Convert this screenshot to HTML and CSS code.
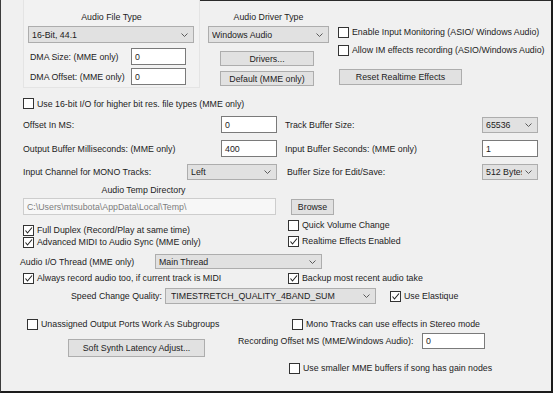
FILE: index.html
```html
<!DOCTYPE html>
<html>
  <head>
    <title>Audio Settings</title>
    <link rel="stylesheet" href="styles.css">
  </head>
  <body>
    <div class="dlg">
      <div class="top">
        <section class="grp">
          <h2 class="ttl">Audio File Type</h2>
          <div class="sel file-sel"><span>16-Bit, 44.1</span><svg class="chev" width="7" height="4"><polyline points="0.5,0.5 3.5,3.5 6.5,0.5"/></svg></div>
          <div class="dma first"><label>DMA Size: (MME only)</label><div class="edit dma-in">0</div></div>
          <div class="dma"><label>DMA Offset: (MME only)</label><div class="edit dma-in">0</div></div>
        </section>
        <section class="drv">
          <h2 class="ttl">Audio Driver Type</h2>
          <div class="sel drv-sel"><span>Windows Audio</span><svg class="chev" width="7" height="4"><polyline points="0.5,0.5 3.5,3.5 6.5,0.5"/></svg></div>
          <div class="btn drv-btn first">Drivers...</div>
          <div class="btn drv-btn second">Default (MME only)</div>
        </section>
        <section class="opts">
          <div class="cb opt1"><span class="box"></span>Enable Input Monitoring (ASIO/ Windows Audio)</div>
          <div class="cb opt2"><span class="box"></span>Allow IM effects recording (ASIO/Windows Audio)</div>
          <div class="btn reset">Reset Realtime Effects</div>
        </section>
      </div>

      <div class="row r16">
        <div class="cb"><span class="box"></span>Use 16-bit I/O for higher bit res. file types (MME only)</div>
      </div>

      <div class="row pair r-offset">
        <label class="lbl-l">Offset In MS:</label><div class="edit num">0</div>
        <label class="lbl-r">Track Buffer Size:</label>
        <div class="sel num-sel"><span>65536</span><svg class="chev" width="7" height="4"><polyline points="0.5,0.5 3.5,3.5 6.5,0.5"/></svg></div>
      </div>

      <div class="row pair r-out">
        <label class="lbl-l">Output Buffer Milliseconds: (MME only)</label><div class="edit num">400</div>
        <label class="lbl-r">Input Buffer Seconds: (MME only)</label><div class="edit num">1</div>
      </div>

      <div class="row pair r-chan">
        <label class="lbl-l short">Input Channel for MONO Tracks:</label>
        <div class="sel chan-sel"><span>Left</span><svg class="chev" width="7" height="4"><polyline points="0.5,0.5 3.5,3.5 6.5,0.5"/></svg></div>
        <label class="lbl-r alt">Buffer Size for Edit/Save:</label>
        <div class="sel num-sel"><span>512 Bytes</span><svg class="chev" width="7" height="4"><polyline points="0.5,0.5 3.5,3.5 6.5,0.5"/></svg></div>
      </div>

      <div class="row r-tmp"><div class="tmp-ttl">Audio Temp Directory</div></div>

      <div class="row r-path">
        <div class="edit path">C:\Users\mtsubota\AppData\Local\Temp\</div>
        <div class="btn browse">Browse</div>
      </div>

      <div class="row r-checks">
        <div class="col-l">
          <div class="cb duplex"><span class="box"><svg width="9" height="9"><polyline points="1.5,4.5 3.5,7 8,1.5"/></svg></span>Full Duplex (Record/Play at same time)</div>
          <div class="cb adv"><span class="box"><svg width="9" height="9"><polyline points="1.5,4.5 3.5,7 8,1.5"/></svg></span>Advanced MIDI to Audio Sync (MME only)</div>
        </div>
        <div class="col-r">
          <div class="cb quick"><span class="box"></span>Quick Volume Change</div>
          <div class="cb rte"><span class="box"><svg width="9" height="9"><polyline points="1.5,4.5 3.5,7 8,1.5"/></svg></span>Realtime Effects Enabled</div>
        </div>
      </div>

      <div class="row r-thread">
        <label class="thread-lbl">Audio I/O Thread (MME only)</label>
        <div class="sel thread-sel"><span>Main Thread</span><svg class="chev" width="7" height="4"><polyline points="0.5,0.5 3.5,3.5 6.5,0.5"/></svg></div>
      </div>

      <div class="row r-always">
        <div class="cb always"><span class="box"><svg width="9" height="9"><polyline points="1.5,4.5 3.5,7 8,1.5"/></svg></span>Always record audio too, if current track is MIDI</div>
        <div class="cb"><span class="box"><svg width="9" height="9"><polyline points="1.5,4.5 3.5,7 8,1.5"/></svg></span>Backup most recent audio take</div>
      </div>

      <div class="row r-speed">
        <label class="speed-lbl">Speed Change Quality:</label>
        <div class="sel speed-sel"><span>TIMESTRETCH_QUALITY_4BAND_SUM</span><svg class="chev" width="7" height="4"><polyline points="0.5,0.5 3.5,3.5 6.5,0.5"/></svg></div>
        <div class="cb elastique"><span class="box"><svg width="9" height="9"><polyline points="1.5,4.5 3.5,7 8,1.5"/></svg></span>Use Elastique</div>
      </div>

      <div class="row r-ports">
        <div class="cb ports"><span class="box"></span>Unassigned Output Ports Work As Subgroups</div>
        <div class="cb"><span class="box"></span>Mono Tracks can use effects in Stereo mode</div>
      </div>

      <div class="row r-soft">
        <div class="btn soft">Soft Synth Latency Adjust...</div>
        <div class="rec">
          <label class="rec-lbl">Recording Offset MS (MME/Windows Audio):</label>
          <div class="edit rec-in">0</div>
        </div>
      </div>

      <div class="row r-small">
        <div class="cb"><span class="box"></span>Use smaller MME buffers if song has gain nodes</div>
      </div>
    </div>
  </body>
</html>
```

FILE: styles.css
```css
body {
    margin: 0;
    padding: 0;
    font-family: "Liberation Sans", Arial, sans-serif;
    font-size: 8.8px;
    color: #1c1c1c;
}

.dlg {
    position: relative;
    width: 553px;
    height: 393px;
    box-sizing: border-box;
    background: #f0f0f0;
    border-left: 1px solid #3c3c3c;
    border-right: 2px solid #1c1c1c;
    border-bottom: 2px solid #1c1c1c;
    overflow: hidden;
}
.dlg::before {
    content: "";
    position: absolute;
    top: 0;
    left: 199px;
    right: 0;
    height: 1px;
    background: #2a2a2a;
}

label {
    white-space: nowrap;
}

/* common controls */
.sel,
.btn,
.edit {
    box-sizing: border-box;
    white-space: nowrap;
    overflow: hidden;
}
.sel {
    display: flex;
    align-items: center;
    height: 17px;
    padding-left: 3px;
    background: #e1e1e1;
    border: 1px solid #adadad;
}
.sel span {
    flex: 1;
    overflow: hidden;
}
.chev {
    margin: 0 5px 0 3px;
    flex: none;
}
.chev polyline {
    fill: none;
    stroke: #5a5a5a;
    stroke-width: 1;
}
.btn {
    display: flex;
    align-items: center;
    justify-content: center;
    background: #e1e1e1;
    border: 1px solid #adadad;
}
.edit {
    display: flex;
    align-items: center;
    height: 17px;
    padding-left: 3px;
    background: #fff;
    border: 1px solid #7a7a7a;
}
.cb {
    display: flex;
    align-items: center;
    height: 12px;
    white-space: nowrap;
}
.box {
    display: flex;
    align-items: center;
    justify-content: center;
    width: 11px;
    height: 11px;
    box-sizing: border-box;
    margin-right: 3px;
    background: #fff;
    border: 1px solid #333;
    flex: none;
}
.box polyline {
    fill: none;
    stroke: #222;
    stroke-width: 1.1;
}

/* top block */
.top {
    display: flex;
    height: 90px;
}
.ttl {
    margin: 11px 0 0 0;
    height: 12px;
    line-height: 12px;
    font-size: 8.8px;
    font-weight: normal;
    text-align: center;
}
.grp {
    box-sizing: border-box;
    width: 177px;
    height: 88px;
    margin-left: 22px;
    border: 1px solid #e4e4e4;
    border-top: none;
    background: #f2f2f2;
}
.file-sel {
    width: 166px;
    margin: 3px 0 0 4px;
}
.dma {
    display: flex;
    align-items: center;
    height: 17px;
    margin-top: 3px;
}
.dma.first {
    margin-top: 5px;
}
.dma label {
    box-sizing: border-box;
    width: 107px;
    padding-left: 6px;
}
.dma-in {
    width: 55px;
}
.drv {
    width: 121px;
    margin-left: 8px;
}
.drv-sel {
    width: 121px;
    margin-top: 3px;
}
.drv-btn {
    width: 94px;
    height: 15px;
    margin-left: 12px;
}
.drv-btn.first {
    margin-top: 8px;
}
.drv-btn.second {
    margin-top: 5px;
}
.opts {
    margin-left: 9px;
}
.opt1 {
    margin-top: 26px;
}
.opt2 {
    margin-top: 6px;
}
.reset {
    width: 123px;
    height: 16px;
    margin: 13px 0 0 1px;
}

/* rows */
.row {
    display: flex;
    align-items: center;
}
.r16 {
    margin: 7px 0 0 22px;
    height: 13px;
}
.pair {
    height: 17px;
    margin-top: 7px;
}
.r-offset {
    margin-top: 6px;
}
.lbl-l {
    width: 198px;
    margin-left: 22px;
}
.lbl-l.short {
    width: 164px;
}
.lbl-r {
    width: 197px;
    margin-left: 8px;
}
.lbl-r.alt {
    width: 195px;
    margin-left: 10px;
}
.num {
    width: 56px;
}
.num-sel {
    width: 56px;
    height: 16px;
}
.chan-sel {
    width: 90px;
    height: 16px;
}
.r-chan {
    height: 16px;
}
.r-tmp {
    height: 12px;
    margin-top: 4px;
}
.tmp-ttl {
    width: 241px;
    margin-left: 22px;
    text-align: center;
}
.r-path {
    height: 17px;
    margin-top: 2px;
}
.path {
    width: 253px;
    margin-left: 22px;
    color: #7d7d7d;
    background: #f7f7f7;
    border-color: #cdcdcd;
}
.browse {
    width: 43px;
    height: 16px;
    margin-left: 15px;
}
.r-checks {
    height: 31px;
    margin-top: 4px;
    align-items: flex-start;
}
.col-l {
    width: 265px;
    margin-left: 22px;
}
.duplex {
    margin-top: 5px;
}
.col-r .rte {
    margin-top: 4px;
}
.r-thread {
    height: 15px;
    margin-top: 4px;
}
.thread-lbl {
    width: 135px;
    margin-left: 19px;
}
.thread-sel {
    width: 167px;
    height: 15px;
}
.r-always {
    height: 12px;
    margin-top: 3px;
}
.always {
    width: 265px;
    margin-left: 22px;
}
.r-speed {
    height: 16px;
    margin-top: 4px;
}
.speed-lbl {
    width: 94px;
    margin-left: 70px;
}
.speed-sel {
    width: 211px;
    height: 16px;
    padding-left: 5px;
}
.elastique {
    margin-left: 14px;
}
.r-ports {
    height: 12px;
    margin-top: 14px;
}
.ports {
    width: 265px;
    margin-left: 26px;
}
.r-soft {
    height: 24px;
    margin-top: 3px;
    align-items: flex-start;
}
.soft {
    width: 137px;
    height: 18px;
    margin: 6px 0 0 67px;
}
.rec {
    display: flex;
    align-items: center;
    height: 16px;
    margin-left: 33px;
}
.rec-lbl {
    width: 184px;
}
.rec-in {
    width: 63px;
    height: 16px;
}
.r-small {
    height: 12px;
    margin: 5px 0 0 288px;
}
```
